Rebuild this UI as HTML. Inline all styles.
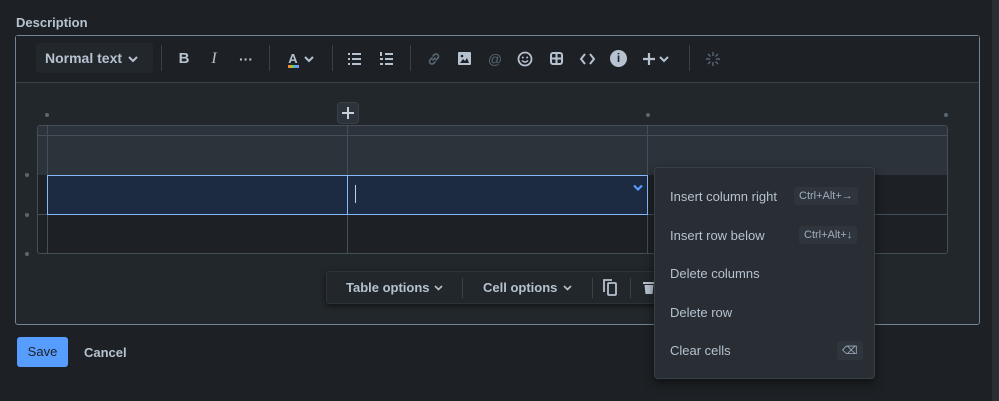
<!DOCTYPE html>
<html><head><style>
*{box-sizing:border-box;margin:0;padding:0}
body{width:999px;height:401px;background:#1d2125;font-family:"Liberation Sans",sans-serif;color:#b6c2cf;position:relative;overflow:hidden}
.a{position:absolute}
.ico{position:absolute;top:50px;font-size:14px;color:#b6c2cf;text-align:center;width:20px;line-height:18px}
.sep{position:absolute;top:45px;width:1px;height:26px;background:#3a4048}
.mi{position:absolute;left:670px;font-size:13px;color:#b6c2cf}
.kb{position:absolute;background:#2f353c;border-radius:3px;font-size:11px;color:#9fadbc;padding:3px 5px}
.dot{position:absolute;width:4px;height:4px;border-radius:2px;background:#596773}
svg{position:absolute;overflow:visible}
</style></head><body>
<div class="a" style="left:992px;top:0;width:7px;height:401px;background:#2a2e33"></div>
<div class="a" style="left:16px;top:15px;font-size:13px;font-weight:bold;color:#b6c2cf">Description</div>
<div class="a" style="left:15px;top:35px;width:965px;height:290px;border:1px solid #738496;border-radius:3px;background:#22272b"></div>
<div class="a" style="left:16px;top:36px;width:963px;height:47px;background:#1d2125;border-bottom:1px solid #38414a"></div>
<div class="a" style="left:36px;top:43px;width:117px;height:30px;background:#22272b;border-radius:3px;font-size:14px;font-weight:bold;line-height:30px;padding-left:9px">Normal text</div>
<svg style="left:128px;top:55px" width="10" height="8"><path d="M1 2l4 4 4-4" stroke="#b6c2cf" stroke-width="2" fill="none"/></svg>
<div class="sep" style="left:161px"></div>
<div class="ico" style="left:174px;font-weight:bold;font-size:15px">B</div>
<div class="ico" style="left:204px;font-style:italic;font-family:'Liberation Serif';font-size:16px">I</div>
<div class="ico" style="left:236px;font-weight:bold">···</div>
<div class="sep" style="left:269px"></div>
<div class="ico" style="left:283px;font-weight:bold;font-size:13px">A<div style="height:3px;width:11px;margin:-3px auto 0;background:linear-gradient(90deg,#f87168,#e2b203,#4bce97,#579dff,#9f8fef)"></div></div>
<svg style="left:304px;top:55px" width="10" height="8"><path d="M1 2l4 4 4-4" stroke="#b6c2cf" stroke-width="2" fill="none"/></svg>
<div class="sep" style="left:332px"></div>
<svg style="left:348px;top:53px" width="14" height="12"><g fill="#b6c2cf"><rect x="0" y="0" width="2" height="2"/><rect x="0" y="5" width="2" height="2"/><rect x="0" y="10" width="2" height="2"/><rect x="4" y="0" width="9" height="2"/><rect x="4" y="5" width="9" height="2"/><rect x="4" y="10" width="9" height="2"/></g></svg>
<svg style="left:380px;top:52px" width="14" height="14"><g fill="#b6c2cf"><rect x="0" y="0" width="2" height="4"/><rect x="0" y="6" width="3" height="2"/><rect x="0" y="11" width="3" height="2"/><rect x="5" y="1" width="8" height="2"/><rect x="5" y="6" width="8" height="2"/><rect x="5" y="11" width="8" height="2"/></g></svg>
<div class="sep" style="left:410px"></div>
<svg style="left:427px;top:52px" width="14" height="14"><path d="M6 8l2-2M5 6L3 8a2.5 2.5 0 0 0 3.5 3.5L8 10M9 8l2-2a2.5 2.5 0 0 0-3.5-3.5L6 4" stroke="#596773" stroke-width="1.6" fill="none" stroke-linecap="round"/></svg>
<svg style="left:458px;top:52px" width="13" height="13"><rect x="0" y="0" width="13" height="13" rx="1" fill="#b6c2cf"/><path d="M2 11l3-4 2 2 2-3 2 5z" fill="#1d2125"/><circle cx="4" cy="4" r="1.3" fill="#1d2125"/></svg>
<div class="ico" style="left:485px;color:#596773">@</div>
<svg style="left:517px;top:51px" width="16" height="16"><circle cx="8" cy="8" r="6.5" stroke="#b6c2cf" stroke-width="1.8" fill="none"/><circle cx="5.8" cy="6.5" r="1" fill="#b6c2cf"/><circle cx="10.2" cy="6.5" r="1" fill="#b6c2cf"/><path d="M5 9.5q3 3 6 0" stroke="#b6c2cf" stroke-width="1.5" fill="none"/></svg>
<svg style="left:550px;top:52px" width="13" height="13"><rect x="1" y="1" width="11" height="11" rx="2" stroke="#b6c2cf" stroke-width="2" fill="none"/><path d="M6.5 1v11M1 6.5h11" stroke="#b6c2cf" stroke-width="2"/></svg>
<svg style="left:580px;top:53px" width="15" height="12"><path d="M5 1L1 6l4 5M10 1l4 5-4 5" stroke="#b6c2cf" stroke-width="2" fill="none"/></svg>
<div class="a" style="left:610px;top:50px;width:17px;height:17px;border-radius:9px;background:#b6c2cf;color:#1d2125;font-weight:bold;font-size:12px;text-align:center;line-height:17px">i</div>
<svg style="left:642px;top:52px" width="14" height="14"><path d="M7 1v12M1 7h12" stroke="#b6c2cf" stroke-width="2.2"/></svg>
<svg style="left:659px;top:55px" width="10" height="8"><path d="M1 2l4 4 4-4" stroke="#b6c2cf" stroke-width="2" fill="none"/></svg>
<div class="sep" style="left:689px"></div>
<svg style="left:706px;top:52px" width="14" height="14"><path d="M7 0v4M7 10v4M0 7h4M10 7h4M2 2l2.5 2.5M9.5 9.5L12 12M12 2L9.5 4.5M4.5 9.5L2 12" stroke="#596773" stroke-width="1.4"/></svg>

<div class="dot" style="left:45px;top:113px"></div><div class="dot" style="left:646px;top:113px"></div><div class="dot" style="left:944px;top:113px"></div>
<div class="dot" style="left:25px;top:173px"></div><div class="dot" style="left:25px;top:213px"></div><div class="dot" style="left:25px;top:252px"></div>
<div class="a" style="left:337px;top:102px;width:22px;height:22px;background:#2c333a;border-radius:4px;border:1px solid #3a4048"></div>
<svg style="left:342px;top:107px" width="12" height="12"><path d="M6 0v12M0 6h12" stroke="#c7d1db" stroke-width="2"/></svg>
<div class="a" style="left:37px;top:125px;width:911px;height:129px;border:1px solid #454f59;border-radius:3px;background:#1d2125"></div>
<div class="a" style="left:38px;top:126px;width:909px;height:49px;background:#2c333a"></div>
<div class="a" style="left:38px;top:135px;width:909px;height:1px;background:#454f59"></div>
<div class="a" style="left:47px;top:126px;width:1px;height:127px;background:#454f59"></div>
<div class="a" style="left:347px;top:126px;width:1px;height:127px;background:#454f59"></div>
<div class="a" style="left:647px;top:126px;width:1px;height:127px;background:#454f59"></div>
<div class="a" style="left:38px;top:214px;width:909px;height:1px;background:#454f59"></div>
<div class="a" style="left:47px;top:175px;width:601px;height:40px;background:#1c2b41;border:1px solid #85b8ff"></div>
<div class="a" style="left:347px;top:175px;width:1px;height:40px;background:#85b8ff"></div>
<div class="a" style="left:355px;top:185px;width:1px;height:18px;background:#c7d1db"></div>
<div class="a" style="left:630px;top:180px;width:16px;height:15px;background:#1c2b41"></div>
<svg style="left:633px;top:184px" width="10" height="8"><path d="M1 1.5l4 4 4-4" stroke="#579dff" stroke-width="2.2" fill="none"/></svg>

<div class="a" style="left:326px;top:271px;width:340px;height:33px;background:#22272b;border:1px solid #2c333a;border-radius:3px;box-shadow:0 2px 6px rgba(0,0,0,.5)"></div>
<div class="a" style="left:346px;top:280px;font-size:13px;font-weight:bold">Table options</div>
<svg style="left:434px;top:285px" width="9" height="6"><path d="M1 1l3.5 3.5L8 1" stroke="#b6c2cf" stroke-width="1.6" fill="none"/></svg>
<div class="a" style="left:462px;top:278px;width:1px;height:20px;background:#3a4048"></div>
<div class="a" style="left:483px;top:280px;font-size:13px;font-weight:bold">Cell options</div>
<svg style="left:563px;top:285px" width="9" height="6"><path d="M1 1l3.5 3.5L8 1" stroke="#b6c2cf" stroke-width="1.6" fill="none"/></svg>
<div class="a" style="left:592px;top:278px;width:1px;height:20px;background:#3a4048"></div>
<svg style="left:603px;top:278px" width="16" height="20"><path d="M1 14V2h8" stroke="#b6c2cf" stroke-width="1.8" fill="none"/><rect x="5" y="5" width="8" height="12" rx="1" stroke="#b6c2cf" stroke-width="1.8" fill="none"/></svg>
<div class="a" style="left:630px;top:278px;width:1px;height:20px;background:#3a4048"></div>
<svg style="left:643px;top:281px" width="12" height="14"><rect x="0" y="1" width="12" height="2" fill="#b6c2cf"/><path d="M1.5 4h9l-1 9h-7z" fill="#b6c2cf"/></svg>

<div class="a" style="left:654px;top:167px;width:221px;height:212px;background:#282e33;border:1px solid #384047;border-radius:4px;box-shadow:0 4px 10px rgba(0,0,0,.5)"></div>
<div class="mi" style="top:189px">Insert column right</div><div class="kb" style="left:794px;top:187px">Ctrl+Alt+→</div>
<div class="mi" style="top:228px">Insert row below</div><div class="kb" style="left:799px;top:226px">Ctrl+Alt+↓</div>
<div class="mi" style="top:266px">Delete columns</div>
<div class="mi" style="top:305px">Delete row</div>
<div class="mi" style="top:343px">Clear cells</div><div class="kb" style="left:837px;top:341px">⌫</div>

<div class="a" style="left:17px;top:337px;width:51px;height:30px;background:#579dff;border-radius:3px;color:#1d2125;font-size:13px;text-align:center;line-height:30px">Save</div>
<div class="a" style="left:84px;top:345px;font-size:13px;font-weight:bold;color:#b6c2cf">Cancel</div>
</body></html>
